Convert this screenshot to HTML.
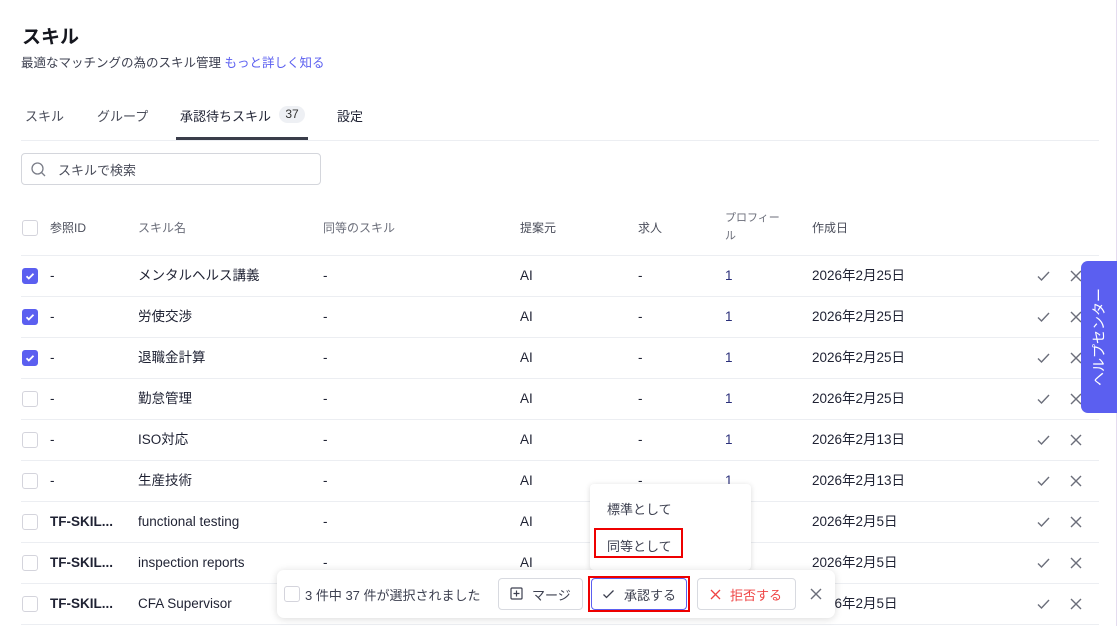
<!DOCTYPE html>
<html><head><meta charset="utf-8"><style>
*{box-sizing:border-box;margin:0;padding:0}
body{width:1119px;height:626px;overflow:hidden;background:#fff;font-family:"Liberation Sans","Noto Sans CJK JP",sans-serif;color:#1f2233;position:relative}
.a{position:absolute;white-space:nowrap}
.cb{position:absolute;left:22px;width:16px;height:16px;border:1px solid #d4d4dc;border-radius:3px;background:#fff}
.cb.on{background:#5b5ff0;border-color:#5b5ff0}
.line{position:absolute;left:21px;width:1078px;height:1px;background:#eceef2}
.row{font-size:13.5px;color:#1f2233;line-height:18px;height:18px}
.row span{vertical-align:top}
.hd{font-size:12px;color:#6b6e7a}
</style></head><body>
<div class="a" style="left:22px;top:22px;font-size:19px;font-weight:bold;color:#15171f">スキル</div>
<div class="a" style="left:21px;top:52px;font-size:12.5px;color:#3d4050">最適なマッチングの為のスキル管理 <span style="color:#5b5ff0">もっと詳しく知る</span></div>
<div class="a" style="left:25px;top:106px;font-size:13px;color:#4a4d5a">スキル</div>
<div class="a" style="left:97px;top:106px;font-size:13px;color:#4a4d5a">グループ</div>
<div class="a" style="left:180px;top:106px;font-size:13px;color:#1f2233">承認待ちスキル</div>
<div class="a" style="left:279px;top:106px;width:26px;height:17px;border-radius:9px;background:#eef0f4;font-size:12px;text-align:center;line-height:17px;color:#333">37</div>
<div class="a" style="left:337px;top:106px;font-size:13px;color:#1f2233">設定</div>
<div class="a" style="left:176px;top:137px;width:132px;height:3px;background:#3a3d4a"></div>
<div class="line" style="top:140px"></div>
<div class="a" style="left:21px;top:153px;width:300px;height:32px;border:1px solid #d4d6dc;border-radius:4px"></div>
<svg class="a" style="left:30px;top:161px" width="17" height="17" viewBox="0 0 17 17"><circle cx="7.5" cy="7.5" r="5.5" fill="none" stroke="#7a7d88" stroke-width="1.3"/><path d="M11.5 11.5L15 15" stroke="#7a7d88" stroke-width="1.3"/></svg>
<div class="a" style="left:58px;top:160px;font-size:13px;color:#4a4d5a">スキルで検索</div>
<div class="cb" style="top:220px"></div>
<div class="a hd" style="left:50px;top:219px;color:#4a4d5a">参照ID</div>
<div class="a hd" style="left:138px;top:219px">スキル名</div>
<div class="a hd" style="left:323px;top:219px">同等のスキル</div>
<div class="a hd" style="left:520px;top:219px;color:#4a4d5a">提案元</div>
<div class="a hd" style="left:638px;top:219px;color:#4a4d5a">求人</div>
<div class="a hd" style="left:725px;top:209px;font-size:11px;line-height:18px;white-space:normal;width:64px">プロフィー<br>ル</div>
<div class="a hd" style="left:812px;top:219px;color:#4a4d5a">作成日</div>
<div id="rows"></div>
<script>
var d=[["-","メンタルヘルス講義","2026年2月25日",1],["-","労使交渉","2026年2月25日",1],["-","退職金計算","2026年2月25日",1],["-","勤怠管理","2026年2月25日",0],["-","ISO対応","2026年2月13日",0],["-","生産技術","2026年2月13日",0],["TF-SKIL...","functional testing","2026年2月5日",0],["TF-SKIL...","inspection reports","2026年2月5日",0],["TF-SKIL...","CFA Supervisor","2026年2月5日",0]];
var h="";
h+='<div class="line" style="top:255px"></div>';
d.forEach(function(r,i){var t=255+41*i;var c=t+21;
function tx(x,s,st){return '<div class="a row" style="left:'+x+'px;top:'+(c-9)+'px;'+(st||'')+'"><span>'+s+'</span></div>';}
h+='<div class="cb'+(r[3]?' on':'')+'" style="top:'+(c-8)+'px">'+(r[3]?'<svg width="14" height="14" viewBox="0 0 14 14"><path d="M3.5 7.2l2.3 2.3 4.7-4.8" fill="none" stroke="#fff" stroke-width="1.8"/></svg>':'')+'</div>';
h+=tx(50,r[0],'font-weight:'+(r[0]=="-"?"normal":"bold"));
h+=tx(138,r[1]);h+=tx(323,'-');h+=tx(520,'AI');h+=tx(638,'-');h+=tx(725,'1','color:#2a2f7a');h+=tx(812,r[2]);
h+='<svg class="a" style="left:1036px;top:'+(c-7)+'px" width="15" height="14" viewBox="0 0 15 14"><path d="M2 7.5l3.5 3.5L13 3" fill="none" stroke="#6b6e7a" stroke-width="1.4"/></svg>';
h+='<svg class="a" style="left:1070px;top:'+(c-6)+'px" width="12" height="12" viewBox="0 0 12 12"><path d="M1 1l10 10M11 1L1 11" stroke="#6b6e7a" stroke-width="1.4"/></svg>';
h+='<div class="line" style="top:'+(t+41)+'px"></div>';});
document.getElementById("rows").innerHTML=h;
</script>
<div class="a" style="left:1116px;top:0;width:1px;height:626px;background:#e4dcef"></div>
<div class="a" style="left:1081px;top:261px;width:36px;height:152px;background:#5b5ff0;border-radius:7px 0 0 7px"></div>
<div class="a" style="left:1024px;top:325px;width:150px;height:24px;color:#fff;font-size:14px;text-align:center;line-height:24px;transform:rotate(-90deg)">ヘルプセンター</div>
<div class="a" style="left:590px;top:484px;width:161px;height:86px;background:#fff;border-radius:4px;box-shadow:0 1px 6px rgba(0,0,0,.15)"></div>
<div class="a" style="left:607px;top:499px;font-size:13px;color:#3d4050">標準として</div>
<div class="a" style="left:594px;top:528px;width:89px;height:30px;border:2px solid #e00"></div>
<div class="a" style="left:607px;top:536px;font-size:13px;color:#3d4050">同等として</div>
<div class="a" style="left:277px;top:570px;width:558px;height:48px;background:#fff;border-radius:7px;box-shadow:0 1px 8px rgba(0,0,0,.15)"></div>
<div class="a" style="left:284px;top:586px;width:16px;height:16px;border:1px solid #d4d4dc;border-radius:3px"></div>
<div class="a" style="left:305px;top:585px;font-size:13px;color:#3d4050">3 件中 37 件が選択されました</div>
<div class="a" style="left:498px;top:578px;width:85px;height:32px;border:1px solid #d8dae0;border-radius:4px"></div>
<svg class="a" style="left:510px;top:587px" width="13" height="13" viewBox="0 0 13 13"><rect x="1" y="1" width="11" height="11" rx="1" fill="none" stroke="#3d4050" stroke-width="1.2"/><path d="M6.5 3.5v6M3.5 6.5h6" stroke="#3d4050" stroke-width="1.2"/></svg>
<div class="a" style="left:532px;top:585px;font-size:13px;color:#3d4050">マージ</div>
<div class="a" style="left:588px;top:576px;width:102px;height:36px;border:2px solid #e00"></div>
<div class="a" style="left:591px;top:578px;width:96px;height:32px;border:1px solid #5b5ff0;border-radius:4px"></div>
<svg class="a" style="left:602px;top:588px" width="13" height="12" viewBox="0 0 13 12"><path d="M1.5 6.5l3 3L11.5 2.5" fill="none" stroke="#3d4050" stroke-width="1.3"/></svg>
<div class="a" style="left:624px;top:585px;font-size:13px;color:#3d4050">承認する</div>
<div class="a" style="left:697px;top:578px;width:99px;height:32px;border:1px solid #d8dae0;border-radius:4px"></div>
<svg class="a" style="left:710px;top:589px" width="11" height="11" viewBox="0 0 11 11"><path d="M1 1l9 9M10 1L1 10" stroke="#ef4444" stroke-width="1.3"/></svg>
<div class="a" style="left:730px;top:585px;font-size:13px;color:#ef4444">拒否する</div>
<svg class="a" style="left:810px;top:588px" width="12" height="12" viewBox="0 0 12 12"><path d="M1 1l10 10M11 1L1 11" stroke="#6b6e7a" stroke-width="1.4"/></svg>
</body></html>
